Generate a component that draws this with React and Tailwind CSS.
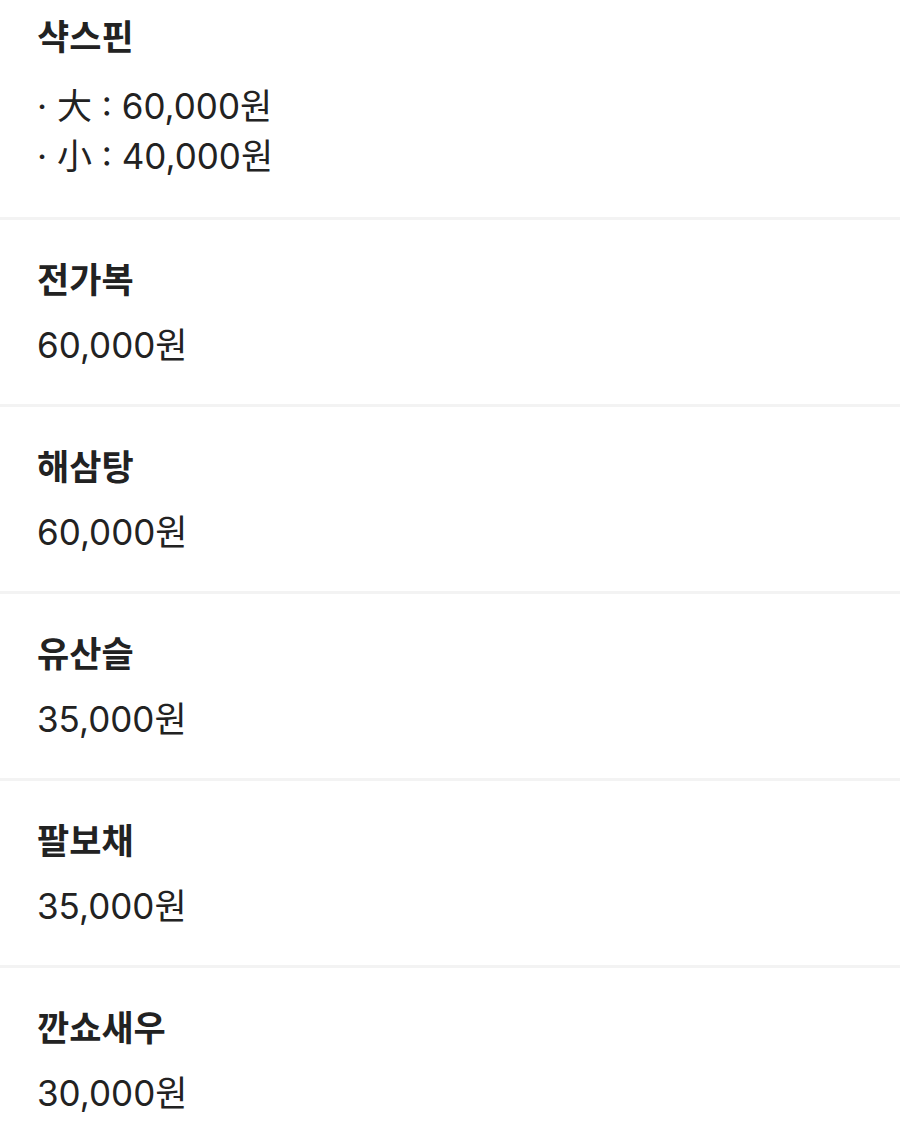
import React from 'react';

const menus = [
  { name: '전가복', price: '60,000원' },
  { name: '해삼탕', price: '60,000원' },
  { name: '유산슬', price: '35,000원' },
  { name: '팔보채', price: '35,000원' },
  { name: '깐쇼새우', price: '30,000원' },
];

const titleFont = { fontFamily: '"Noto Sans CJK KR", sans-serif' };

const MenuItem = ({ name, children, first }) => (
  <div className={`px-[37px] border-b-[3px] border-[#f3f3f3] ${first ? 'pt-[11px] pb-[37px]' : 'pt-[34px] pb-[35px]'}`}>
    <h3 className="text-[35px] font-bold leading-[48px] text-[#222]" style={titleFont}>
      {name}
    </h3>
    <div className={first ? 'mt-[23px]' : 'mt-[19px]'}>{children}</div>
  </div>
);

const Price = ({ children }) => (
  <p className="text-[35px] leading-[48px] text-[#222] font-['Inter','Noto_Sans_CJK_KR',sans-serif]">
    {children}
  </p>
);

export default function App() {
  return (
    <div className="w-[900px] bg-white">
      <MenuItem name="샥스핀" first>
        <div className="flex flex-col gap-[2px]">
          <Price>· 大 : 60,000원</Price>
          <Price>· 小 : 40,000원</Price>
        </div>
      </MenuItem>
      {menus.map((m) => (
        <MenuItem key={m.name} name={m.name}>
          <Price>{m.price}</Price>
        </MenuItem>
      ))}
    </div>
  );
}
